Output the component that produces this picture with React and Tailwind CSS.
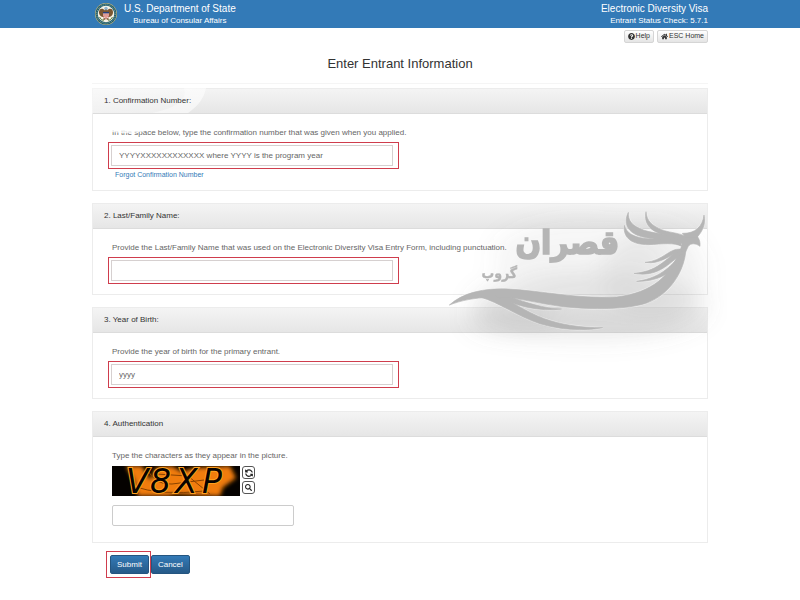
import React, { useState } from 'react';
import { FaHome, FaQuestionCircle, FaSearch, FaSyncAlt } from 'react-icons/fa';

// Round department seal
function Seal() {
  return (
    <svg className="w-6 h-6" viewBox="0 0 48 48" aria-hidden="true">
      <circle cx="24" cy="24" r="22" fill="#c9b878" />
      <circle cx="24" cy="24" r="21" fill="#1f5c6b" />
      <circle cx="24" cy="24" r="18.5" fill="none" stroke="#8fb0a4" strokeWidth="2" strokeDasharray="2 2" />
      <circle cx="24" cy="24" r="16.5" fill="#f6f3e6" />
      <circle cx="24" cy="13" r="3.5" fill="#8fb4cf" />
      <path d="M22 17 C17 11 9 13 10 22 C11 28 16 31 20 30 L18 37 L24 34 L30 37 L28 30 C32 31 37 28 38 22 C39 13 31 11 26 17 L24 14 Z" fill="#7a5630" />
      <path d="M18 20 H30 V27 Q29 32 24 34 Q19 32 18 27 Z" fill="#fff" />
      <path d="M18 20 H30 V23 H18 Z" fill="#27407c" />
      <path d="M20 23 V31 M24 23 V34 M28 23 V31" stroke="#c0392b" strokeWidth="2" />
      <path d="M11 30 Q14 36 19 37 M37 30 Q34 36 29 37" fill="none" stroke="#5d7f3d" strokeWidth="2" />
    </svg>
  );
}

// Grey bird logo with the group name, laid over the panels
function Watermark() {
  return (
    <svg
      className="absolute -right-[22px] top-[163px] w-[300px] h-[180px] pointer-events-none"
      viewBox="0 0 900 540"
      aria-hidden="true"
    >
      <defs>
        <filter id="haze" x="-50%" y="-50%" width="200%" height="200%">
          <feGaussianBlur stdDeviation="36" />
        </filter>
        <g id="bird">
          <path d="M58 342 C100 305 160 291 235 294 C340 300 440 324 560 318 C670 305 725 250 748 178 L768 172 C765 240 720 310 650 336 C590 356 490 356 400 347 C320 338 250 314 180 319 C130 321 95 328 58 342 Z" />
          <path d="M150 318 C210 335 260 375 330 398 C390 416 460 421 518 410 C450 411 390 400 345 384 C280 360 250 330 190 312 Z" />
          <path d="M200 318 C260 345 330 363 395 354 C340 352 290 335 240 318 Z" />
          <path d="M595 64 C580 95 590 126 638 138 C680 147 720 148 752 164 L750 148 C710 124 664 130 628 112 C604 101 594 88 595 64 Z" />
          <path d="M648 62 C640 104 668 124 710 134 C735 140 748 148 756 160 L750 180 L766 184 L775 166 C782 156 797 156 810 166 C811 155 809 146 802 136 L764 134 C735 124 715 124 695 116 C666 104 650 90 648 62 Z" />
          <path d="M583 103 C578 144 610 161 655 161 C700 159 730 154 756 166 L752 156 C720 139 680 148 640 142 C608 136 590 126 583 103 Z" />
          <path d="M822 72 C818 106 796 128 757 127 L766 138 L802 138 C818 120 828 98 822 72 Z" />
          <path d="M752 174 C715 172 700 210 645 214 C692 222 718 190 752 183 Z" />
          <path d="M752 180 C710 190 698 240 612 247 C682 260 718 218 754 188 Z" />
          <path d="M754 188 C730 215 700 260 620 271 C694 272 738 237 760 192 Z" />
        </g>
      </defs>
      <g filter="url(#haze)" fill="#777">
        <ellipse cx="480" cy="345" rx="350" ry="95" opacity="0.16" />
        <ellipse cx="250" cy="385" rx="130" ry="35" opacity="0.16" />
        <ellipse cx="670" cy="245" rx="150" ry="140" opacity="0.1" />
        <ellipse cx="450" cy="200" rx="260" ry="110" opacity="0.07" />
      </g>
      <use href="#bird" fill="#fff" stroke="#fff" strokeWidth="6" opacity="0.4" />
      <use href="#bird" fill="#b5b5b5" stroke="#b5b5b5" strokeWidth="2" />
      <g
        fill="#b5b5b5"
        stroke="#b5b5b5"
        fontWeight="bold"
        fontFamily="'DejaVu Sans Condensed', 'DejaVu Sans', sans-serif"
        direction="rtl"
        textAnchor="middle"
      >
        <text x="412" y="188" fontSize="100" strokeWidth="5">قصران</text>
        <text x="208" y="262" fontSize="42" strokeWidth="1">گروپ</text>
      </g>
    </svg>
  );
}

// Faded white stroke across the corner of the first panel
function Swoosh() {
  return (
    <svg
      className="absolute left-0 top-0 w-[130px] h-[56px] pointer-events-none"
      viewBox="0 0 130 56"
      aria-hidden="true"
    >
      <defs>
        <linearGradient id="fade" x1="0" y1="0" x2="1" y2="0">
          <stop offset="0" stopColor="#fff" stopOpacity="0.45" />
          <stop offset="1" stopColor="#fff" stopOpacity="0.3" />
        </linearGradient>
      </defs>
      <path d="M0 0 H114 C112 10 106 18 96 25 H0 Z" fill="url(#fade)" />
      <path d="M92 0 H114 C112 10 106 18 96 25 H60 C84 20 96 12 92 0 Z" fill="#fff" opacity="0.4" />
      <path d="M14 40 C30 43 48 43 62 38 L56 42 C45 46 28 46 14 43 Z" fill="#fff" opacity="0.8" />
    </svg>
  );
}

function Captcha() {
  return (
    <svg className="w-32 h-[30px] overflow-visible" viewBox="0 0 128 30" role="img" aria-label="Verification picture">
      <defs>
        <filter id="smudge">
          <feGaussianBlur stdDeviation="2" />
        </filter>
        <clipPath id="frame">
          <rect width="128" height="30" />
        </clipPath>
      </defs>
      <rect width="128" height="30" fill="#050200" />
      <g clipPath="url(#frame)">
        <g filter="url(#smudge)" fill="#f07c08">
          <path d="M14 0 L30 0 L38 14 L44 2 L60 0 L70 6 L82 2 L118 0 L124 12 L110 22 L96 30 L64 28 L56 30 L26 30 L22 14 Z" />
          <path d="M100 18 L112 18 L108 30 H98 Z" />
        </g>
        <path d="M34 2 Q44 20 60 18 T92 14 M20 20 Q50 30 92 25 M44 8 L76 10 L98 28" stroke="#8a4300" strokeWidth="1" fill="none" />
      </g>
      <g
        fontFamily="'DejaVu Sans', sans-serif"
        fontStyle="italic"
        fontSize="33"
        strokeWidth="2"
        stroke="#ffa01e"
        fill="#080300"
        paintOrder="stroke"
      >
        <text x="14" y="27">V</text>
        <text x="38" y="27">8</text>
        <text x="63" y="27">X</text>
        <text x="90" y="27">P</text>
      </g>
    </svg>
  );
}

function Panel({ title, children }) {
  return (
    <section className="mb-3 border border-[#ececec] bg-white">
      <h2 className="h-[25px] px-[11px] flex items-center text-[8px] text-[#333] bg-linear-to-b from-[#f4f4f4] to-[#e6e6e6] border-b border-[#dcdcdc]">
        <span className="relative z-10">{title}</span>
      </h2>
      <div className="px-[19px] pt-[13px] pb-[10px]">{children}</div>
    </section>
  );
}

// Text box inside a red highlight frame
function MarkedField({ id, label, placeholder }) {
  const [value, setValue] = useState('');

  return (
    <>
      <label htmlFor={id} className="block text-[8px] leading-3 text-[#666]">
        {label}
      </label>
      <div className="mt-[3px] -ml-1 w-[291px] max-w-full border border-[#cf3d4d] p-[2px] pr-[5px]">
        <input
          id={id}
          type="text"
          value={value}
          placeholder={placeholder}
          onChange={(e) => setValue(e.target.value)}
          className="block w-full h-[21px] px-[7px] border border-[#d6d0d0] text-[8px] text-[#555] placeholder:text-[#666]"
        />
      </div>
    </>
  );
}

function App() {
  const [code, setCode] = useState('');
  const toolButton =
    'h-[13px] px-[3px] flex items-center gap-px rounded-xs border border-[#d5d5d5] bg-linear-to-b from-white to-[#e4e4e4] text-[7px] text-[#333]';
  const iconButton =
    'w-[13px] h-[13px] flex items-center justify-center rounded-[3px] border border-[#555] bg-white text-[#222]';
  const mainButton =
    'h-[19px] px-[6px] rounded-xs border border-[#245580] bg-linear-to-b from-[#337ab7] to-[#265a88] text-[8px] text-white';

  return (
    <div className="min-h-screen bg-white font-['Liberation_Sans',Arial,sans-serif]">
      <header className="bg-[#337ab7] text-white">
        <div className="mx-auto w-full max-w-[616px] h-7 flex items-center justify-between">
          <div className="flex items-center gap-[6px] pl-[2px]">
            <Seal />
            <div className="text-center">
              <p className="text-[10px] leading-3">U.S. Department of State</p>
              <p className="text-[8px] leading-[11px]">Bureau of Consular Affairs</p>
            </div>
          </div>
          <div className="text-right">
            <p className="text-[10px] leading-3">Electronic Diversity Visa</p>
            <p className="text-[8px] leading-[11px]">Entrant Status Check: 5.7.1</p>
          </div>
        </div>
      </header>

      <main className="relative mx-auto w-full max-w-[616px] pb-5">
        <nav className="flex justify-end gap-[3px] pt-[2px]">
          <button type="button" className={toolButton}>
            <FaQuestionCircle /> Help
          </button>
          <button type="button" className={toolButton}>
            <FaHome /> ESC Home
          </button>
        </nav>

        <h1 className="mt-[13px] pb-[11px] border-b border-[#f5f5f5] text-center text-[13px] leading-4 text-[#333]">
          Enter Entrant Information
        </h1>

        <form className="mt-1" onSubmit={(e) => e.preventDefault()}>
          <div className="relative">
            <Panel title="1. Confirmation Number:">
              <MarkedField
                id="confirmation"
                label="In the space below, type the confirmation number that was given when you applied."
                placeholder="YYYYXXXXXXXXXXXX where YYYY is the program year"
              />
              <a href="#forgot" className="block w-fit ml-[3px] text-[7px] leading-[11px] text-[#337ab7]">
                Forgot Confirmation Number
              </a>
            </Panel>
            <Swoosh />
          </div>

          <Panel title="2. Last/Family Name:">
            <MarkedField
              id="family-name"
              label="Provide the Last/Family Name that was used on the Electronic Diversity Visa Entry Form, including punctuation."
            />
          </Panel>

          <Panel title="3. Year of Birth:">
            <MarkedField
              id="birth-year"
              label="Provide the year of birth for the primary entrant."
              placeholder="yyyy"
            />
          </Panel>

          <Panel title="4. Authentication">
            <label htmlFor="captcha" className="block text-[8px] leading-3 text-[#666]">
              Type the characters as they appear in the picture.
            </label>
            <div className="mt-1 flex gap-[2px]">
              <Captcha />
              <div className="flex flex-col gap-[2px]">
                <button type="button" aria-label="New picture" className={iconButton}>
                  <FaSyncAlt className="w-2 h-2 -scale-x-100" />
                </button>
                <button type="button" aria-label="Enlarge picture" className={iconButton}>
                  <FaSearch className="w-[7px] h-[7px]" />
                </button>
              </div>
            </div>
            <input
              id="captcha"
              type="text"
              value={code}
              onChange={(e) => setCode(e.target.value)}
              className="block mt-[9px] mb-[6px] w-[182px] h-[21px] px-[7px] rounded-xs border border-[#ccc] text-[8px] text-[#555]"
            />
          </Panel>

          {/* Form actions */}
          <div className="-mt-1 ml-[14px] flex items-center">
            <div className="flex border border-[#cf3d4d] p-[3px] pr-[1px]">
              <button type="submit" className={mainButton}>
                Submit
              </button>
            </div>
            <button type="button" className={mainButton}>
              Cancel
            </button>
          </div>
        </form>

        <Watermark />
      </main>
    </div>
  );
}

export default App;
